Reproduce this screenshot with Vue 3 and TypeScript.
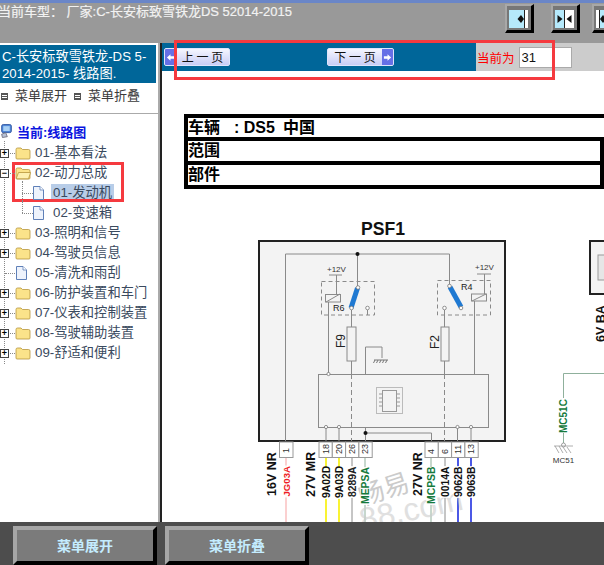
<script setup lang="ts">
interface TreeRow { label: string; kind: 'folder' | 'open' | 'doc'; toggle: '' | '+' | '-'; depth: number; selected?: boolean; last?: boolean }
const rows: TreeRow[] = [
  { label: '01-基本看法', kind: 'folder', toggle: '+', depth: 0 },
  { label: '02-动力总成', kind: 'open', toggle: '-', depth: 0 },
  { label: '01-发动机', kind: 'doc', toggle: '', depth: 1, selected: true },
  { label: '02-变速箱', kind: 'doc', toggle: '', depth: 1, last: true },
  { label: '03-照明和信号', kind: 'folder', toggle: '+', depth: 0 },
  { label: '04-驾驶员信息', kind: 'folder', toggle: '+', depth: 0 },
  { label: '05-清洗和雨刮', kind: 'doc', toggle: '', depth: 0 },
  { label: '06-防护装置和车门', kind: 'folder', toggle: '+', depth: 0 },
  { label: '07-仪表和控制装置', kind: 'folder', toggle: '+', depth: 0 },
  { label: '08-驾驶辅助装置', kind: 'folder', toggle: '+', depth: 0 },
  { label: '09-舒适和便利', kind: 'folder', toggle: '+', depth: 0 },
]
const g1 = [{ t: '18', x: 326 }, { t: '20', x: 339 }, { t: '26', x: 352 }, { t: '23', x: 365 }]
const g2 = [{ t: '4', x: 431 }, { t: '6', x: 445 }, { t: '11', x: 458 }, { t: '13', x: 471 }]
const wires = [
  { x: 286, c: '#f9bcbc', w: 1.4 }, { x: 326, c: '#f8f000', w: 1.6 }, { x: 339, c: '#f8f000', w: 1.6 },
  { x: 352, c: '#8c8c8c', w: 1 }, { x: 365, c: '#8fb09c', w: 1 }, { x: 431, c: '#8fb09c', w: 1 },
  { x: 445, c: '#8c8c8c', w: 1 }, { x: 458, c: '#1f2fe0', w: 1.6 }, { x: 471, c: '#1f2fe0', w: 1.6 },
]
const labels = [
  { t: '16V NR', x: 276, y: 496, c: '#111', s: 12.5 }, { t: 'JG03A', x: 289.5, y: 496.5, c: '#ee1c25', s: 9.6 },
  { t: '27V MR', x: 315, y: 497, c: '#111', s: 12.5 }, { t: '9A02D', x: 329.7, y: 498, c: '#111', s: 10.4 },
  { t: '9A03D', x: 342.7, y: 498, c: '#111', s: 10.4 }, { t: '8289A', x: 355.7, y: 497, c: '#222', s: 10.4 },
  { t: 'MEPSA', x: 368.7, y: 504, c: '#157a3c', s: 10.4 }, { t: '27V NR', x: 422, y: 496, c: '#111', s: 12.5 },
  { t: 'MCPSB', x: 434.7, y: 504, c: '#157a3c', s: 10.4 }, { t: '0014A', x: 448.7, y: 497, c: '#111', s: 10.4 },
  { t: '9062B', x: 461.7, y: 497, c: '#111', s: 10.4 }, { t: '9063B', x: 474.7, y: 497, c: '#111', s: 10.4 },
]
</script>

<template>
  <div class="app">
    <header class="top">
      <div class="top-title">当前车型： 厂家:C-长安标致雪铁龙DS 52014-2015</div>
      <div class="top-tools">
        <button class="tool first" aria-label="左"><svg viewBox="0 0 19 18"><rect width="19" height="18" fill="#b5e9fb"/><rect x="16" width="3" height="18" fill="#fff"/><path d="M15.5 0V18" stroke="#222"/><path d="M8.5 9L12 5L15 9L12 13Z" fill="#111"/></svg></button>
        <button class="tool" aria-label="中"><svg viewBox="0 0 19 18"><rect width="9.5" height="18" fill="#b5e9fb"/><rect x="9.5" width="9.5" height="18" fill="#fff"/><path d="M9.5 0V18" stroke="#222"/><path d="M2.5 5L7.5 9L2.5 13ZM16.5 5L11.5 9L16.5 13Z" fill="#111"/></svg></button>
        <button class="tool" aria-label="右"><svg viewBox="0 0 19 18"><rect width="3" height="18" fill="#fff"/><rect x="3" width="16" height="18" fill="#b5e9fb"/><path d="M3.5 0V18" stroke="#222"/><path d="M10.5 9L7 5L4 9L7 13Z" fill="#111"/></svg></button>
      </div>
    </header>

    <main class="middle">
      <aside class="side">
        <div class="side-title">C-长安标致雪铁龙-DS 5-2014-2015- 线路图.</div>
        <div class="side-actions">
          <span class="act"><i class="mini"></i>菜单展开</span>
          <span class="act"><i class="mini"></i>菜单折叠</span>
        </div>
        <div class="tree">
          <div class="tree-root">
            <svg class="ico" viewBox="0 0 16 18"><rect x="2" y="1" width="12" height="10" rx="2" fill="#4f86d6" stroke="#2a4f9c"/><rect x="4" y="3" width="8" height="6" fill="#a8d0f5"/><path d="M2 13L7 11L9 16L3 17Z" fill="#b8c2d6" stroke="#667"/></svg>
            <span>当前:线路图</span>
          </div>
          <div v-for="r in rows" :key="r.label + r.depth" class="row" :class="{ child: r.depth === 1, last: r.last }">
            <span class="gutter">
              <i v-if="r.toggle" class="toggle">{{ r.toggle === '+' ? '+' : '−' }}</i>
            </span>
            <svg v-if="r.kind !== 'doc'" class="ico" viewBox="0 0 16 14">
              <path d="M1 3.5Q1 2 2.5 2H6L7.5 3.5H13.5Q15 3.5 15 5V12Q15 13 14 13H2Q1 13 1 12Z" fill="#fbe38a" stroke="#b6953c" stroke-width=".8"/>
              <path v-if="r.kind === 'open'" d="M1.2 12.5L3.5 6.5H15.6L13.5 12.8H2Z" fill="#fdf0b0" stroke="#b6953c" stroke-width=".8"/>
            </svg>
            <svg v-else class="ico doc" viewBox="0 0 11 14">
              <path d="M.5 .5H7L10.5 4V13.5H.5Z" fill="#eef3fc" stroke="#5f80b8"/>
              <path d="M7 .5V4H10.5" fill="#fff" stroke="#5f80b8" stroke-width=".8"/>
            </svg>
            <span class="lbl" :class="{ sel: r.selected }">{{ r.label }}</span>
          </div>
        </div>
      </aside>

      <section class="content">
        <div class="pager">
          <div class="pager-blue">
            <button class="pg prev">
              <b class="pg-arrow"><svg viewBox="0 0 10 10"><path d="M1 5L5 1.5V3.5H9V6.5H5V8.5Z" fill="#fff"/></svg></b>
              <span>上 一 页</span>
            </button>
            <button class="pg next">
              <span>下 一 页</span>
              <b class="pg-arrow"><svg viewBox="0 0 10 10"><path d="M9 5L5 1.5V3.5H1V6.5H5V8.5Z" fill="#fff"/></svg></b>
            </button>
          </div>
          <div class="pager-now">
            <span class="now-label">当前为</span>
            <input class="now-input" value="31" />
          </div>
        </div>
        <div class="sheet">
          <div class="spec">
            <div class="spec-row first">车辆<b class="code">: DS5</b><span class="cn">中国</span></div>
            <div class="spec-row">范围</div>
            <div class="spec-row">部件</div>
          </div>
          <svg class="diagram" viewBox="162 189 442 333" width="442" height="333">
            <text x="383" y="235" text-anchor="middle" class="t-title">PSF1</text>
            <rect x="259" y="241" width="246" height="200" fill="#f3f3f3" stroke="#222" stroke-width="2"/>
            <rect x="590" y="241" width="30" height="53" fill="#f3f3f3" stroke="#222" stroke-width="2"/>
            <rect x="598" y="255" width="10" height="25" fill="#e6e6e6" stroke="#999"/>
            <g fill="none" stroke="#8a8a8a" stroke-width="1">
              <path d="M285.5 441V254H449.5V285"/>
              <path d="M357.5 254V286M351.5 310V374"/>
              <path d="M328.5 302V374M336.5 275V294"/>
              <path d="M329 275H342M477 274H491M484.5 274V294M474.5 301V374"/>
              <path d="M367.5 310V315M444.5 310V374"/>
              <path d="M365.5 374V347H382V358"/>
              <rect x="318.5" y="374.5" width="170" height="53"/>
              <path d="M326 427V441M339 427V441M457.5 427V441M471 427V441"/>
              <path d="M365.5 433H431.5V441M365.5 427V441"/>
              <path d="M351.5 374V441M444.5 374V441" stroke-dasharray="5 3"/>
              <rect x="347" y="327" width="9" height="34" fill="#f3f3f3"/>
              <rect x="441" y="327" width="8" height="34" fill="#f3f3f3"/>
              <rect x="325.5" y="294.5" width="15" height="7.5" fill="#f3f3f3"/>
              <path d="M326 302L340 294"/>
              <rect x="471.5" y="294" width="15" height="7" fill="#f3f3f3"/>
              <path d="M472 301L486 294"/>
              <rect x="321.5" y="281.5" width="53" height="33.5" stroke-dasharray="4 3"/>
              <rect x="437.5" y="280.5" width="53" height="34.5" stroke-dasharray="4 3"/>
              <rect x="376.5" y="387.5" width="26" height="26" stroke="#bbb"/>
              <rect x="382.5" y="390.5" width="14" height="21" stroke="#999"/>
              <path d="M379 394H382M379 398H382M379 402H382M379 406H382M397 394H400M397 398H400M397 402H400M397 406H400" stroke="#999"/>
            </g>
            <path d="M375 360L373.5 363M378 360L376.5 363M381 360L379.5 363M384 360L382.5 363M387 360L385.5 363M374 360H388" stroke="#777" stroke-width="1"/>
            <circle cx="357.5" cy="254" r="2" fill="#111"/>
            <circle cx="365.5" cy="433" r="2" fill="#111"/>
            <path d="M357.5 288L351 308" stroke="#1f79d2" stroke-width="5"/>
            <path d="M450 287L461 307" stroke="#1f79d2" stroke-width="5"/>
            <g fill="#fff" stroke="#777" stroke-width=".8">
              <circle cx="358" cy="287.5" r="1.8"/><circle cx="351.5" cy="308" r="1.8"/><circle cx="367.5" cy="308" r="1.8"/>
              <circle cx="449.5" cy="286" r="1.8"/><circle cx="461" cy="308" r="1.8"/><circle cx="444.5" cy="308" r="1.8"/>
              <circle cx="328.5" cy="374" r="1.6"/><circle cx="326" cy="427" r="1.6"/><circle cx="339" cy="427" r="1.6"/>
              <circle cx="457.5" cy="427" r="1.6"/><circle cx="471" cy="427" r="1.6"/>
            </g>
            <text x="327" y="272" class="t-small">+12V</text>
            <text x="475" y="270" class="t-small">+12V</text>
            <text x="333" y="311" class="t-mid">R6</text>
            <text x="461" y="290" class="t-mid">R4</text>
            <text transform="translate(344.5 348) rotate(-90)" class="t-fuse">F9</text>
            <text transform="translate(438.5 349) rotate(-90)" class="t-fuse">F2</text>

            <rect x="279.5" y="442" width="13.5" height="15.5" fill="#fff" stroke="#999"/>
            <text transform="translate(289 453) rotate(-90)" class="t-pin">1</text>
            <g v-for="(p, i) in g1" :key="p.t">
              <rect :x="319 + i * 13.3" y="442" width="13.3" height="15.5" fill="#fff" stroke="#999"/>
              <text :transform="`translate(${p.x + 3} 454) rotate(-90)`" class="t-pin">{{ p.t }}</text>
            </g>
            <g v-for="(p, i) in g2" :key="p.t">
              <rect :x="425 + i * 13.3" y="442" width="13.3" height="15.5" fill="#fff" stroke="#999"/>
              <text :transform="`translate(${p.x + 3} 454) rotate(-90)`" class="t-pin">{{ p.t }}</text>
            </g>
            <path v-for="w in wires" :key="w.x" :d="`M${w.x} 458V522`" :stroke="w.c" :stroke-width="w.w"/>
            <text transform="translate(362 506) rotate(-18)" class="t-mark">畅易</text>
            <text transform="translate(362 531) rotate(-12)" class="t-mark2">88.com</text>
            <g v-for="l in labels" :key="l.t">
              <rect v-if="l.s < 12" :x="l.x - 8.5" :y="l.y - (l.t.startsWith('M') ? 37 : 31)" width="10" :height="l.t.startsWith('M') ? 38 : 32" fill="#fff" fill-opacity=".85"/>
              <text :transform="`translate(${l.x} ${l.y}) rotate(-90)`" :fill="l.c" :font-size="l.s" class="t-wire">{{ l.t }}</text>
            </g>

            <text transform="translate(605 342) rotate(-90)" fill="#111" font-size="12.5" class="t-wire">6V BA</text>
            <path d="M604 373.5H563.5V398M563.5 433V443" fill="none" stroke="#8fb09c"/>
            <text transform="translate(567 433) rotate(-90)" fill="#157a3c" font-size="10" class="t-wire">MC51C</text>
            <circle cx="563.5" cy="445" r="2" fill="#fff" stroke="#888" stroke-width=".8"/>
            <path d="M555 446L559 453M559 446L563 453M563 447L567 453M567 447L571 453M554 446H573" stroke="#999" stroke-width=".8"/>
            <text x="563.5" y="463" text-anchor="middle" class="t-small">MC51</text>
          </svg>
        </div>
      </section>
    </main>

    <footer class="foot">
      <button class="fbtn">菜单展开</button>
      <button class="fbtn">菜单折叠</button>
    </footer>

    <div class="mark mark-a"></div>
    <div class="mark mark-b"></div>
  </div>
</template>

<style scoped>
.app {
  position: relative;
  width: 604px;
  height: 565px;
  overflow: hidden;
  display: flex;
  flex-direction: column;
  background: #fff;
  font-family: "Liberation Sans", "Noto Sans CJK SC", sans-serif;
}
.top {
  height: 43px;
  flex: none;
  box-sizing: border-box;
  background: #999;
  border-top: 3px solid #6a86c8;
  display: flex;
  justify-content: space-between;
  align-items: flex-start;
  overflow: hidden;
}
.top-title {
  margin: 0 0 0 -2px;
  color: #f2f2f2;
  font-size: 13px;
  line-height: 18px;
  white-space: nowrap;
  -webkit-text-stroke: .2px #f2f2f2;
}
.top-tools { display: flex; gap: 12px; margin: 1px -17px 0 0; }
.tool {
  width: 29px;
  height: 29px;
  padding: 0 0 2px 2px;
  box-sizing: border-box;
  background: #777;
  border: solid;
  border-width: 2px 3px 3px 2px;
  border-color: #a8a8a8 #000 #000 #a8a8a8;
  display: flex;
  align-items: flex-end;
  justify-content: flex-start;
}
.tool.first { margin-right: 5px; }
.tool svg { width: 19px; height: 18px; display: block; }
.middle { flex: 1; min-height: 0; display: flex; }
.side {
  width: 162px;
  flex: none;
  box-sizing: border-box;
  border-right: 2px solid #222;
  box-shadow: inset -2px 0 0 #aaa;
  padding-top: 2px;
}
.side-title {
  width: 156px;
  height: 38px;
  box-sizing: border-box;
  background: #006699;
  color: #fff;
  font-size: 13.2px;
  line-height: 17px;
  padding: 3px 6px 0 2px;
  overflow: hidden;
}
.side-actions {
  width: 158px;
  height: 31px;
  box-sizing: border-box;
  border-bottom: 1px solid #aaa;
  display: flex;
  align-items: flex-start;
  gap: 7px;
  padding: 5px 0 0 1px;
  color: #3a3a3a;
  font-size: 13px;
  line-height: 16px;
}
.act { display: flex; align-items: center; gap: 7px; white-space: nowrap; }
.mini {
  width: 7px;
  height: 7px;
  box-sizing: border-box;
  border: 1px solid #555;
  background: repeating-linear-gradient(#555 0 1px, #fff 1px 2px);
}
.tree { padding-top: 8px; }
.tree-root {
  height: 20px;
  display: flex;
  align-items: center;
  gap: 4px;
  color: #0a14e0;
  font-size: 13px;
  font-weight: 700;
  margin-top: -1px;
  margin-bottom: 2px;
}
.tree-root .ico { margin: 0; width: 13px; height: 16px; }
.row {
  height: 20px;
  display: flex;
  align-items: center;
  font-size: 13.3px;
  color: #3a4a5e;
  white-space: nowrap;
  position: relative;
}
.row::before {
  content: "";
  position: absolute;
  left: 4px;
  top: -2px;
  bottom: -1px;
  border-left: 1px dotted #888;
}
.gutter {
  width: 15px;
  height: 20px;
  flex: none;
  display: flex;
  align-items: center;
  position: relative;
  z-index: 1;
}
.gutter::after {
  content: "";
  position: absolute;
  left: 5px;
  right: 0;
  top: 10px;
  border-top: 1px dotted #888;
}
.toggle {
  width: 9px;
  height: 9px;
  box-sizing: border-box;
  border: 1px solid #444;
  background: #fff;
  font-style: normal;
  font-size: 9px;
  font-weight: 700;
  line-height: 7px;
  text-align: center;
  color: #000;
  position: relative;
  z-index: 1;
}
.ico { width: 16px; height: 14px; flex: none; position: relative; z-index: 1; }
.ico.doc { height: 14px; width: 11px; margin: 0 4px 0 1px; }
.lbl { margin-left: 3px; padding: 1px 2px 1px 1px; line-height: 16px; }
.lbl.sel { background: #b8cde8; }
.child { padding-left: 22px; }
.child .gutter { width: 11px; }
.child .gutter::after { left: 0; }
.child .gutter::before {
  content: "";
  position: absolute;
  left: 0;
  top: -2px;
  height: 22px;
  border-left: 1px dotted #888;
}
.child.last .gutter::before { height: 12px; }
.child .ico.doc { margin: 0; }
.child .lbl { margin-left: 7px; padding-left: 2px; }
.content { flex: 1; min-width: 0; display: flex; flex-direction: column; }
.pager { height: 28px; flex: none; display: flex; }
.pager-blue {
  width: 314px;
  background: #006699;
  display: flex;
  align-items: center;
  padding-left: 2px;
  box-sizing: border-box;
  gap: 97px;
}
.pg {
  height: 18px;
  width: 66px;
  box-sizing: border-box;
  padding: 0;
  border: 1px solid #dfe4fb;
  border-radius: 2px;
  background: linear-gradient(#f5f6ff, #c9cdf5);
  color: #111;
  font: 12px/16px "Noto Sans CJK SC", sans-serif;
  display: flex;
  align-items: center;
  justify-content: space-between;
  overflow: hidden;
}
.pg.next { width: 67px; }
.pg span { flex: 1; text-align: center; }
.pg-arrow {
  width: 11px;
  height: 16px;
  flex: none;
  background: #6670e6;
  display: flex;
  align-items: center;
  justify-content: center;
}
.pg-arrow svg { width: 9px; height: 9px; display: block; }
.pager-now {
  flex: 1;
  background: #ccc;
  display: flex;
  align-items: center;
  gap: 4px;
  padding-left: 1px;
}
.now-label { color: #f00; font-size: 12.5px; white-space: nowrap; }
.now-input {
  width: 53px;
  height: 21px;
  box-sizing: border-box;
  border: 1px solid #aaa;
  padding: 0 2px;
  font: 13px "Liberation Sans", sans-serif;
  color: #111;
  outline: none;
}
.sheet { flex: 1; min-height: 0; overflow: hidden; padding-top: 43px; }
.spec {
  margin-left: 22px;
  width: 420px;
  box-sizing: border-box;
  border: solid #000;
  border-width: 4px 0 4px 4px;
  background: #000;
  display: flex;
  flex-direction: column;
  gap: 4px;
}
.spec-row {
  height: 20px;
  margin-right: 4px;
  background: #fff;
  color: #000;
  font-size: 16px;
  line-height: 20px;
  font-weight: 700;
}
.spec-row.first { margin-right: 0; height: 19px; line-height: 19px; }
.code { margin-left: 14px; font-family: "Liberation Sans", sans-serif; }
.cn { margin-left: 8px; }
.diagram { display: block; overflow: hidden; }
.t-title { font: 700 17.6px "Liberation Sans", sans-serif; fill: #111; }
.t-small { font: 8px "Liberation Sans", sans-serif; fill: #333; }
.t-mid { font: 9px "Liberation Sans", sans-serif; fill: #222; }
.t-fuse { font: 12px "Liberation Sans", sans-serif; fill: #222; }
.t-pin { font: 9px "Liberation Sans", sans-serif; fill: #333; }
.t-wire { font-family: "Liberation Sans", sans-serif; font-weight: 700; }
.t-mark { font: 26px "Noto Sans CJK SC", sans-serif; fill: #aaa; opacity: .6; }
.t-mark2 { font: 32px "Liberation Sans", sans-serif; fill: #ccc; opacity: .6; }
.foot {
  height: 43px;
  flex: none;
  background: #4d4d4d;
  display: flex;
  gap: 8px;
  padding: 4px 0 0 13px;
  box-sizing: border-box;
}
.fbtn {
  width: 144px;
  height: 39px;
  box-sizing: border-box;
  border: 4px solid;
  border-color: #a6a6a6 #000 #000 #a6a6a6;
  background: #7b7b7b;
  color: #c4ecff;
  font: 700 14px/26px "Noto Sans CJK SC", sans-serif;
  padding: 0 0 2px;
}
.mark { position: absolute; box-sizing: border-box; border: 3px solid #f53a3f; pointer-events: none; }
.mark-a { left: 174px; top: 40px; width: 381px; height: 40px; }
.mark-b { left: 12px; top: 162px; width: 112px; height: 40px; }
</style>
